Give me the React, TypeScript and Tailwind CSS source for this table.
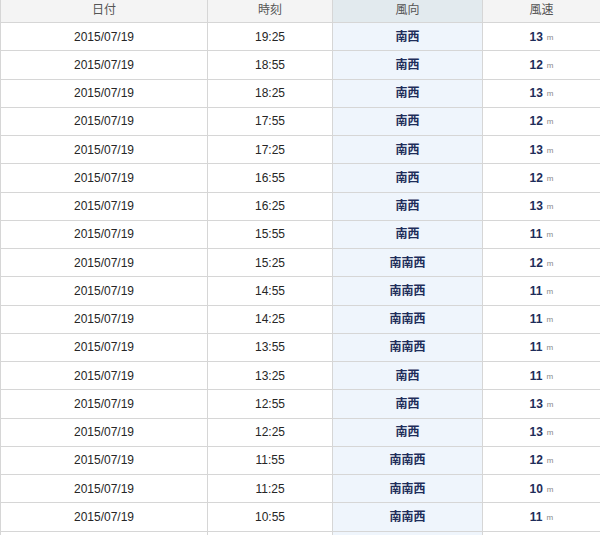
const rows: [string, string, number][] = [
  ["19:25", "南西", 13],
  ["18:55", "南西", 12],
  ["18:25", "南西", 13],
  ["17:55", "南西", 12],
  ["17:25", "南西", 13],
  ["16:55", "南西", 12],
  ["16:25", "南西", 13],
  ["15:55", "南西", 11],
  ["15:25", "南南西", 12],
  ["14:55", "南南西", 11],
  ["14:25", "南南西", 11],
  ["13:55", "南南西", 11],
  ["13:25", "南西", 11],
  ["12:55", "南西", 13],
  ["12:25", "南西", 13],
  ["11:55", "南南西", 12],
  ["11:25", "南南西", 10],
  ["10:55", "南南西", 11],
]

const font = { fontFamily: '"Liberation Sans", Arial, "Noto Sans CJK JP", sans-serif' }

export default function App() {
  return (
    <div className="h-[535px] w-[600px] overflow-hidden bg-white" style={font}>
      <div className="grid grid-cols-[208px_125px_150px_1fr] text-[12px] text-[#262626]">
        {/* header */}
        <div className="flex h-[23px] items-center justify-center border-b border-r border-l border-[#d6d6d6] bg-[#f4f4f4] pb-[2px] text-[#555]">日付</div>
        <div className="flex h-[23px] items-center justify-center border-b border-r border-[#d6d6d6] bg-[#f4f4f4] pb-[2px] text-[#555]">時刻</div>
        <div className="flex h-[23px] items-center justify-center border-b border-r border-[#d6d6d6] bg-[#e2eaee] pb-[2px] text-[#555]">風向</div>
        <div className="flex h-[23px] items-center justify-center border-b border-[#d6d6d6] bg-[#f4f4f4] pb-[2px] text-[#555]">風速</div>

        {rows.map(([time, dir, speed]) => (
          <div key={time} className="contents">
            <div className="flex h-[28.25px] items-center justify-center border-b border-r border-l border-[#d6d6d6]">2015/07/19</div>
            <div className="flex h-[28.25px] items-center justify-center border-b border-r border-[#d6d6d6]">{time}</div>
            <div className="flex h-[28.25px] items-center justify-center border-b border-r border-[#d6d6d6] bg-[#eff5fc] font-bold text-[#1e2d5a]">
              {dir}
            </div>
            <div className="flex h-[28.25px] items-center justify-center border-b border-[#d6d6d6]">
              <span className="font-bold text-[#1e2d5a]">{speed}</span>
              <span className="ml-[4px] mt-[2px] text-[8px] text-[#888]">m</span>
            </div>
          </div>
        ))}

        {/* next row, only its top edge is in view */}
        <div className="h-[28px] border-r border-l border-[#d6d6d6]" />
        <div className="h-[28px] border-r border-[#d6d6d6]" />
        <div className="h-[28px] border-r border-[#d6d6d6] bg-[#eff5fc]" />
        <div className="h-[28px]" />
      </div>
    </div>
  )
}
